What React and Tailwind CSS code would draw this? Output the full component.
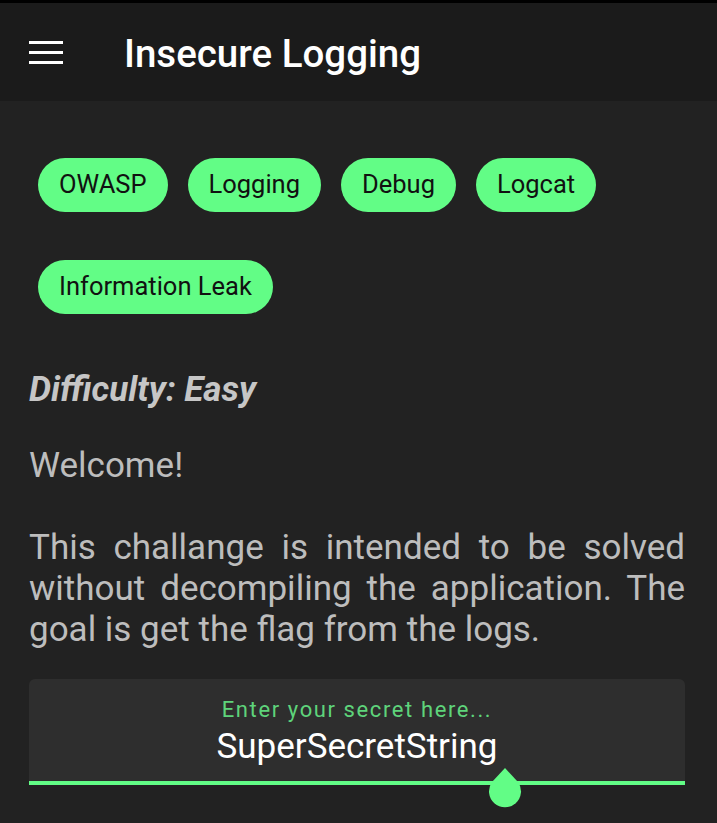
import { useState } from 'react';

const TAGS = ['OWASP', 'Logging', 'Debug', 'Logcat', 'Information Leak'];

const Chip = ({ label }) => (
	<span className="inline-flex items-center h-[54px] px-[21px] rounded-full bg-[#62fd86] text-[#111] text-[25.5px] leading-none">
		{label}
	</span>
);

const MenuIcon = () => (
	<div className="flex flex-col gap-[7px] w-[34px]">
		<span className="block h-[3px] bg-white" />
		<span className="block h-[3px] bg-white" />
		<span className="block h-[3px] bg-white" />
	</div>
);

export default function App() {
	const [secret, setSecret] = useState('SuperSecretString');

	return (
		<div
			className="w-[717px] h-[823px] overflow-hidden bg-[#222222] flex flex-col"
			style={{ fontFamily: 'Roboto, "Noto Sans", sans-serif' }}
		>
			<div className="h-[3px] bg-black" />
			<header className="h-[98px] bg-[#1b1b1b] flex items-center pl-[29px]">
				<MenuIcon />
				<h1 className="ml-[61px] mt-[4px] text-white text-[38.5px] font-medium">
					Insecure Logging
				</h1>
			</header>

			<main className="pl-[29px] pr-[32px] pt-[57px]">
				<div className="flex flex-wrap gap-x-[20px] gap-y-[48px] pl-[9px]">
					{TAGS.map((tag) => (
						<Chip key={tag} label={tag} />
					))}
				</div>

				<p className="mt-[56px] text-[#c6c6c6] text-[35px] font-bold italic leading-[40px]">
					Difficulty: Easy
				</p>

				<p className="mt-[35px] text-[#bdbdbd] text-[35px] leading-[41px]">
					Welcome!
				</p>

				<p className="mt-[41px] text-[#bdbdbd] text-[35px] leading-[41px] text-justify">
					This challange is intended to be solved without decompiling the
					application. The goal is get the flag from the logs.
				</p>

				<div className="relative mt-[29px] h-[106px] bg-[#2e2e2e] rounded-t-[6px] flex flex-col items-center pt-[18px]">
					<span className="text-[#5ed47b] text-[22px] leading-[26px] tracking-[1.6px]">
						Enter your secret here...
					</span>
					<input
						value={secret}
						onChange={(e) => setSecret(e.target.value)}
						className="mt-[4px] w-full bg-transparent text-center text-white text-[35px] leading-[40px] outline-none"
						style={{ fontFamily: 'Roboto, sans-serif' }}
					/>
					<div className="absolute left-0 right-0 bottom-0 h-[4px] bg-[#62fd86]" />
					<svg
						className="absolute left-[459px] top-[89px]"
						width="34"
						height="40"
						viewBox="0 0 34 40"
					>
						<path d="M17 0 L30 14 A16 16 0 1 1 4 14 Z" fill="#62fd86" />
					</svg>
				</div>
			</main>
		</div>
	);
}
